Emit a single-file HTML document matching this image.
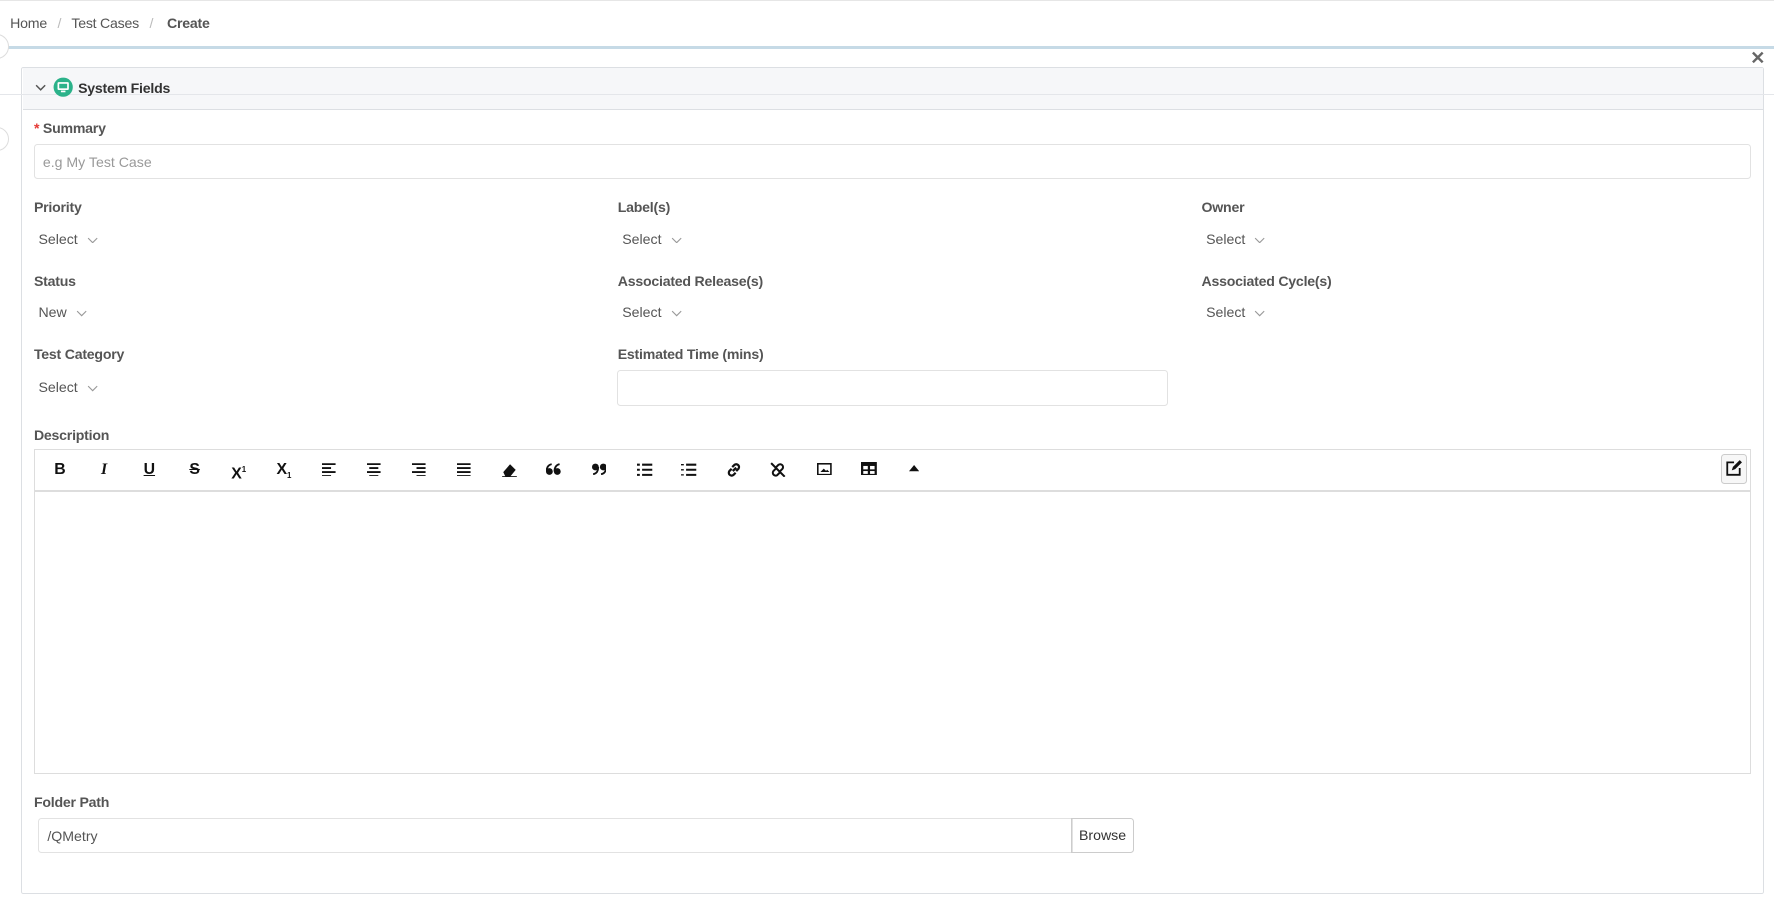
<!DOCTYPE html>
<html><head><meta charset="utf-8"><style>
html,body{margin:0;padding:0;background:#fff;overflow:hidden}
body{width:1774px;height:898px}
#w{zoom:1.1314;position:relative;width:1568px;height:794px;font-family:"Liberation Sans",sans-serif;font-size:12.5px;color:#555}
.a{position:absolute}
.lbl{position:absolute;font-weight:bold;color:#555;font-size:12.5px;letter-spacing:-0.2px}
.sel{position:absolute;color:#555;font-size:12.5px}
.sel svg{vertical-align:middle;margin-left:8px}
.inp{position:absolute;border:1px solid #e2e2e2;border-radius:3px;background:#fff;box-sizing:border-box}
.tb{position:absolute;top:408px;width:16px;height:14px;text-align:center;font-weight:bold;color:#111;font-size:14px;line-height:14px}
</style></head><body><div id="w">
<div class="a" style="left:0;top:0;width:1568px;height:1px;background:#e6e6e6"></div>
<div class="a" style="left:9px;top:13px;font-size:12.5px;color:#555;letter-spacing:-0.2px">Home <span style="color:#bbb;margin:0 6px">/</span> Test Cases <span style="color:#bbb;margin:0 6px">/</span> <b style="color:#555;margin-left:3px">Create</b></div>
<div class="a" style="left:6px;top:41px;width:1562px;height:2px;background:#c6dae6"></div>
<div class="a" style="left:-14px;top:30px;width:20px;height:20px;border-radius:50%;border:1px solid #ddd;background:#fff"></div>
<div class="a" style="left:-14px;top:112px;width:20px;height:20px;border-radius:50%;border:1px solid #ddd;background:#fff"></div>
<div class="a" style="left:1547px;top:42px;font-size:16px;font-weight:bold;color:#666">✕</div>
<div class="a" style="left:19px;top:59px;width:1540px;height:731px;border:1px solid #dcdfe3;border-radius:2px;box-sizing:border-box"></div>
<div class="a" style="left:20px;top:60px;width:1538px;height:36px;background:#f6f7f9;border-bottom:1px solid #dcdfe3"></div>
<div class="a" style="left:0;top:83px;width:1568px;height:1px;background:#e4e6ea"></div>
<svg class="a" style="left:31px;top:73px" width="10" height="8"><path d="M1 2l4 4 4-4" fill="none" stroke="#555" stroke-width="1.3"/></svg>
<svg class="a" style="left:47px;top:68px" width="18" height="18"><circle cx="9" cy="9" r="8.5" fill="#2bb28a"/><rect x="4" y="4.5" width="10" height="7" rx="1" fill="#fff"/><rect x="5.5" y="6" width="7" height="4" fill="#2bb28a"/><rect x="7" y="12" width="4" height="1.5" fill="#fff"/></svg>
<div class="lbl" style="left:69px;top:71px;color:#333">System Fields</div>
<div class="lbl" style="left:30px;top:106px"><span style="color:#e53935">*</span> Summary</div>
<div class="inp" style="left:30px;top:127px;width:1518px;height:31px"><span class="a" style="left:7px;top:8px;color:#999">e.g My Test Case</span></div>

<div class="lbl" style="left:30px;top:176px">Priority</div>
<div class="lbl" style="left:546px;top:176px">Label(s)</div>
<div class="lbl" style="left:1062px;top:176px">Owner</div>
<div class="sel" style="left:34px;top:204px">Select<svg width="10" height="6"><path d="M1 1l4 4 4-4" fill="none" stroke="#999"/></svg></div>
<div class="sel" style="left:550px;top:204px">Select<svg width="10" height="6"><path d="M1 1l4 4 4-4" fill="none" stroke="#999"/></svg></div>
<div class="sel" style="left:1066px;top:204px">Select<svg width="10" height="6"><path d="M1 1l4 4 4-4" fill="none" stroke="#999"/></svg></div>

<div class="lbl" style="left:30px;top:241px">Status</div>
<div class="lbl" style="left:546px;top:241px">Associated Release(s)</div>
<div class="lbl" style="left:1062px;top:241px">Associated Cycle(s)</div>
<div class="sel" style="left:34px;top:269px">New<svg width="10" height="6"><path d="M1 1l4 4 4-4" fill="none" stroke="#999"/></svg></div>
<div class="sel" style="left:550px;top:269px">Select<svg width="10" height="6"><path d="M1 1l4 4 4-4" fill="none" stroke="#999"/></svg></div>
<div class="sel" style="left:1066px;top:269px">Select<svg width="10" height="6"><path d="M1 1l4 4 4-4" fill="none" stroke="#999"/></svg></div>

<div class="lbl" style="left:30px;top:306px">Test Category</div>
<div class="lbl" style="left:546px;top:306px">Estimated Time (mins)</div>
<div class="sel" style="left:34px;top:335px">Select<svg width="10" height="6"><path d="M1 1l4 4 4-4" fill="none" stroke="#999"/></svg></div>
<div class="inp" style="left:545px;top:327px;width:487px;height:32px"></div>

<div class="lbl" style="left:30px;top:377px">Description</div>
<div class="a" style="left:30px;top:397px;width:1518px;height:287px;border:1px solid #ddd;box-sizing:border-box"></div>
<div class="a" style="left:31px;top:433px;width:1516px;height:2px;background:#ddd"></div>
<div class="tb" style="left:45px">B</div>
<div class="tb" style="left:84px;font-style:italic;font-family:'Liberation Serif',serif">I</div>
<div class="tb" style="left:124px;text-decoration:underline">U</div>
<div class="tb" style="left:164px;text-decoration:line-through">S</div>
<div class="tb" style="left:203px">X<sup style="font-size:7px">1</sup></div>
<div class="tb" style="left:243px">X<sub style="font-size:7px">1</sub></div>
<svg class="a" style="left:285px;top:409px" width="13" height="12"><path d="M0 1h12M0 4.5h8M0 8h12M0 11.5h8" stroke="#111" stroke-width="1.6"/></svg>
<svg class="a" style="left:324px;top:409px" width="13" height="12"><path d="M0 1h12M2 4.5h8M0 8h12M2 11.5h8" stroke="#111" stroke-width="1.6"/></svg>
<svg class="a" style="left:364px;top:409px" width="13" height="12"><path d="M0 1h12M4 4.5h8M0 8h12M4 11.5h8" stroke="#111" stroke-width="1.6"/></svg>
<svg class="a" style="left:404px;top:409px" width="13" height="12"><path d="M0 1h12M0 4.5h12M0 8h12M0 11.5h12" stroke="#111" stroke-width="1.6"/></svg>
<svg class="a" style="left:443px;top:408px" width="15" height="14"><path d="M2 9l6-7 5 5-5 6H4z" fill="#111"/><path d="M1 13h13" stroke="#111"/></svg>
<svg class="a" style="left:483px;top:409px" width="13" height="11"><circle cx="3" cy="7.5" r="3" fill="#111"/><circle cx="10" cy="7.5" r="3" fill="#111"/><path d="M0.5 7.5Q0.5 2 5 1M7.5 7.5Q7.5 2 12 1" fill="none" stroke="#111" stroke-width="1.6"/></svg>
<svg class="a" style="left:523px;top:409px" width="13" height="11"><circle cx="3" cy="3.5" r="3" fill="#111"/><circle cx="10" cy="3.5" r="3" fill="#111"/><path d="M5.5 3.5Q5.5 9 1 10M12.5 3.5Q12.5 9 8 10" fill="none" stroke="#111" stroke-width="1.6"/></svg>
<svg class="a" style="left:563px;top:409px" width="14" height="12"><path d="M0 1.5h2.5M0 6h2.5M0 10.5h2.5M4.5 1.5h9M4.5 6h9M4.5 10.5h9" stroke="#111" stroke-width="1.8"/></svg>
<svg class="a" style="left:602px;top:409px" width="14" height="12"><path d="M0 1.5h2.5M0 6h2.5M0 10.5h2.5" stroke="#111" stroke-width="1.2"/><path d="M4.5 1.5h9M4.5 6h9M4.5 10.5h9" stroke="#111" stroke-width="1.8"/></svg>
<svg class="a" style="left:642px;top:408px" width="14" height="14"><path d="M6 8l3-3M5 6l-2 2a2.5 2.5 0 0 0 3.5 3.5l2-2M9 8l2-2a2.5 2.5 0 0 0-3.5-3.5l-2 2" fill="none" stroke="#111" stroke-width="2"/></svg>
<svg class="a" style="left:681px;top:408px" width="14" height="14"><path d="M5 6l-2 2a2.5 2.5 0 0 0 3.5 3.5l2-2M9 8l2-2a2.5 2.5 0 0 0-3.5-3.5l-2 2M1 1l12 12" fill="none" stroke="#111" stroke-width="1.8"/></svg>
<svg class="a" style="left:722px;top:409px" width="13" height="11"><rect x="0.7" y="0.7" width="11.6" height="9.6" fill="none" stroke="#111" stroke-width="1.4"/><path d="M3 8l3-3 2 2 1-1 2 2z" fill="#111"/></svg>
<svg class="a" style="left:761px;top:408px" width="14" height="12"><rect x="0" y="0" width="14" height="12" fill="#111"/><rect x="2" y="3.5" width="4" height="3" fill="#fff"/><rect x="8" y="3.5" width="4" height="3" fill="#fff"/><rect x="2" y="8" width="4" height="2.5" fill="#fff"/><rect x="8" y="8" width="4" height="2.5" fill="#fff"/></svg>
<svg class="a" style="left:803px;top:411px" width="9" height="6"><path d="M0 5.5L4.5 0 9 5.5z" fill="#111"/></svg>
<div class="a" style="left:1521px;top:401px;width:23px;height:27px;border:1px solid #ccc;border-radius:3px;background:#f7f7f7;box-sizing:border-box"></div>
<svg class="a" style="left:1525px;top:406px" width="16" height="16"><path d="M8 3H2v11h11V8" fill="none" stroke="#111" stroke-width="1.6"/><path d="M6 10l1-3 6-6 2 2-6 6z" fill="#111"/></svg>

<div class="lbl" style="left:30px;top:702px">Folder Path</div>
<div class="inp" style="left:34px;top:723px;width:914px;height:31px;border-radius:3px 0 0 3px"><span class="a" style="left:7px;top:8px;color:#555">/QMetry</span></div>
<div class="a" style="left:947px;top:723px;width:55px;height:31px;border:1px solid #ccc;border-radius:0 3px 3px 0;box-sizing:border-box;text-align:center;line-height:30px;color:#333;font-size:12.5px">Browse</div>
</div></body></html>
